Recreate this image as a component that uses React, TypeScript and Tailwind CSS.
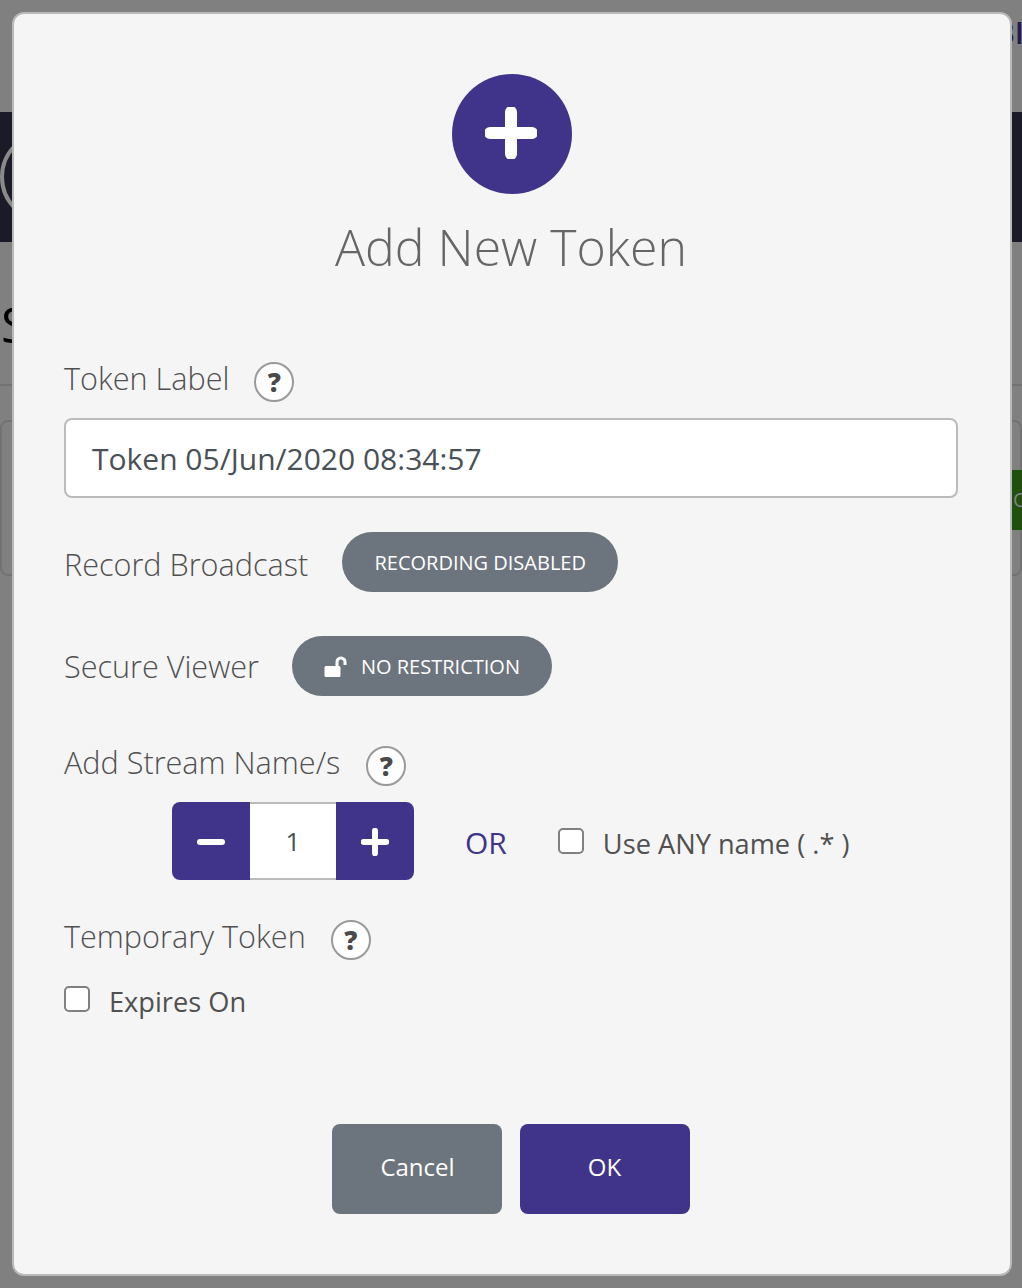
function HelpBadge() {
  return (
    <span className="flex h-10 w-10 items-center justify-center rounded-full border-2 border-[#999999] bg-white text-[26px] leading-none font-extrabold text-[#4a4a4a]">
      ?
    </span>
  );
}

function PlusIcon({ size, stroke }: { size: number; stroke: number }) {
  return (
    <svg width={size} height={size} viewBox="0 0 52 52" fill="none" stroke="white" strokeWidth={stroke} strokeLinecap="round">
      <path d="M26 5v42M5 26h42" />
    </svg>
  );
}

function Checkbox() {
  return <span className="block h-[26px] w-[26px] rounded-[5px] border-2 border-[#808080] bg-white" />;
}

export default function App() {
  return (
    <div className="relative h-[1288px] w-[1022px] overflow-hidden bg-[#808080] [font-family:'Open_Sans',sans-serif]">
      {/* Page behind the overlay */}
      <div className="flex h-[112px] justify-end pt-[15px]">
        <span className="-mr-[2px] text-[30px] leading-9 font-semibold text-[#241a55]">BI</span>
      </div>
      <div className="flex h-[130px] items-center bg-[#1b1a28]">
        <span className="h-[92px] w-[92px] rounded-full border-4 border-[#8a8a8a]" />
      </div>
      <div className="h-[144px] border-b-2 border-[#737373] pt-[50px] pl-px text-[50px] leading-[64px] text-black">S</div>
      <div className="mt-[34px] flex h-[156px] items-center justify-end rounded-[8px] border-2 border-[#737373] pt-1">
        <div className="-mr-[2px] flex h-[60px] w-[10px] items-center overflow-hidden bg-[#1f5010] pl-px text-[20px] text-[#808080]">O</div>
      </div>

      {/* Modal */}
      <div className="absolute top-3 left-3 flex h-[1264px] w-[1000px] flex-col rounded-[12px] border-2 border-[#b9b9b9] bg-[#f5f5f5] px-[50px] pt-[60px] text-[#505050]">
        <div className="flex flex-col items-center">
          <div className="flex h-[120px] w-[120px] items-center justify-center rounded-full bg-[#40348a]">
            <span className="mr-[2px] mb-[2px]">
              <PlusIcon size={52} stroke={12} />
            </span>
          </div>
          <h2 className="mt-[21px] mb-px pr-[2px] text-[50px] leading-[64px] font-light text-[#666666]">Add New Token</h2>
        </div>

        <div className="mt-[82px] flex h-10 items-center gap-[25px]">
          <span className="pb-2 text-[30.6px] leading-10 font-light">Token Label</span>
          <HelpBadge />
        </div>
        <div className="mt-[16px] flex h-20 w-[894px] items-center rounded-[8px] border-2 border-[#bbbbbb] bg-white px-[26px] text-[30px] text-[#495057]">
          Token 05/Jun/2020 08:34:57
        </div>

        <div className="mt-[34px] flex h-[60px] items-center gap-[34px]">
          <span className="pt-1 text-[30.6px] leading-10 font-light">Record Broadcast</span>
          <span className="flex h-[60px] w-[276px] items-center justify-center rounded-full bg-[#6c757d] pt-[2px] text-[20px] text-white">
            RECORDING DISABLED
          </span>
        </div>

        <div className="mt-[44px] flex h-[60px] items-center gap-[33px]">
          <span className="text-[30.6px] leading-10 font-light">Secure Viewer</span>
          <span className="flex h-[60px] w-[260px] items-center justify-center gap-[13px] rounded-full bg-[#6c757d] pt-[2px] text-[20px] text-white">
            <svg width="24" height="22" viewBox="0 0 24 22" fill="white">
              <path d="M2 10h13a1.5 1.5 0 0 1 1.5 1.5v8A1.5 1.5 0 0 1 15 21H2a1.5 1.5 0 0 1-1.5-1.5v-8A1.5 1.5 0 0 1 2 10Z" />
              <path d="M7.5 10V6a5.5 5.5 0 0 1 11 0v3h-3V6a2.5 2.5 0 0 0-5 0v4Z" transform="translate(4 0)" />
            </svg>
            NO RESTRICTION
          </span>
        </div>

        <div className="mt-[50px] flex h-10 items-center gap-[26px]">
          <span className="pb-2 text-[30.6px] leading-10 font-light">Add Stream Name/s</span>
          <HelpBadge />
        </div>

        <div className="mt-[16px] flex h-[78px] items-center pl-[108px]">
          <div className="flex h-[78px] w-[242px] overflow-hidden rounded-[8px]">
            <span className="flex w-[78px] items-center justify-center bg-[#40348a] pt-[2px]">
              <svg width="28" height="28" viewBox="0 0 28 28" fill="none" stroke="white" strokeWidth="6" strokeLinecap="round">
                <path d="M3 14h22" />
              </svg>
            </span>
            <span className="flex flex-1 items-center justify-center border-y-2 border-[#bbbbbb] bg-white text-[26px] text-[#495057]">1</span>
            <span className="flex w-[78px] items-center justify-center bg-[#40348a] pt-[2px]">
              <PlusIcon size={28} stroke={11} />
            </span>
          </div>
          <span className="ml-[51px] pt-[2px] text-[30px] text-[#40348a]">OR</span>
          <span className="ml-[51px] inline-flex">
            <Checkbox />
          </span>
          <span className="ml-[19px] pt-[6px] text-[27.2px] text-[#505050]">Use ANY name ( .* )</span>
        </div>

        <div className="mt-[40px] flex h-10 items-center gap-[25px]">
          <span className="pb-2 text-[30.6px] leading-10 font-light">Temporary Token</span>
          <HelpBadge />
        </div>

        <div className="mt-[21px] flex h-10 items-center gap-[19px]">
          <span className="-mt-1 inline-flex">
            <Checkbox />
          </span>
          <span className="pt-[2px] text-[27.2px] text-[#505050]">Expires On</span>
        </div>

        <div className="mt-[103px] flex justify-center gap-[18px] pr-[3px]">
          <button className="h-[90px] w-[170px] rounded-[8px] bg-[#6c757d] pb-1 pl-[2px] text-[24px] text-white">Cancel</button>
          <button className="h-[90px] w-[170px] rounded-[8px] bg-[#40348a] pb-1 text-[24px] text-white">OK</button>
        </div>
      </div>
    </div>
  );
}
